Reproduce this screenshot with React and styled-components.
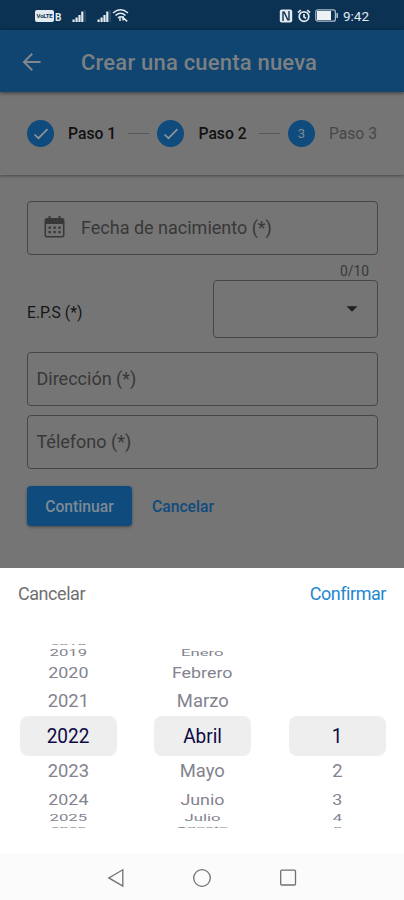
import styled, { createGlobalStyle } from "styled-components";

const years = ["2018", "2019", "2020", "2021", "2022", "2023", "2024", "2025", "2026"];
const months = ["", "Enero", "Febrero", "Marzo", "Abril", "Mayo", "Junio", "Julio", "Agosto"];
const days = ["", "", "", "", "1", "2", "3", "4", "5"];

// row height and text squeeze for each slot of the drum
const slots = [
  { h: 5, x: 0.85, y: 0.12 },
  { h: 13, x: 0.88, y: 0.46 },
  { h: 25, x: 0.94, y: 0.78 },
  { h: 31, x: 0.97, y: 0.94 },
  { h: 40, x: 1, y: 1.04 },
  { h: 29, x: 0.97, y: 0.94 },
  { h: 28, x: 0.94, y: 0.78 },
  { h: 11, x: 0.88, y: 0.44 },
  { h: 6, x: 0.85, y: 0.1 },
];

const Wheel = ({ items }) => (
  <Drum>
    {slots.map((slot, i) => (
      <Slot key={i} $h={slot.h} $active={i === 4}>
        <SlotText $x={slot.x} $y={slot.y}>
          {items[i]}
        </SlotText>
      </Slot>
    ))}
  </Drum>
);

const Check = () => (
  <svg width="18" height="18" viewBox="0 0 18 18" fill="none" stroke="#8d9296" strokeWidth="1.7">
    <path d="M2.5 9.5 L6.5 13.2 L15.5 4.2" />
  </svg>
);

const Signal = () => (
  <svg width="15" height="14" viewBox="0 0 15 14" fill="#e3eaf0">
    <rect x="0.5" y="10.5" width="2.2" height="2.5" />
    <rect x="3.5" y="8.5" width="2.2" height="4.5" />
    <rect x="6.4" y="6" width="2.2" height="7" />
    <rect x="9.2" y="2.5" width="2.2" height="10.5" />
    <rect x="12.6" y="1" width="1" height="12" opacity="0.25" />
  </svg>
);

export default function App() {
  return (
    <Screen>
      <GlobalStyle />
      <StatusBar>
        <StatusLeft>
          <Volte>
            <b>VoLTE</b>
          </Volte>
          <SimMark>B</SimMark>
          <SignalSlot $left={10}>
            <Signal />
          </SignalSlot>
          <SignalSlot $left={10}>
            <Signal />
          </SignalSlot>
          <svg width="17" height="15" viewBox="0 0 17 15" fill="none" stroke="#e3eaf0" strokeWidth="1.5">
            <path d="M1 5 Q8.5 -1.5 16 5" />
            <path d="M3.5 7.5 Q8.5 3 13.5 7.5" />
            <path d="M6 10 Q8.5 7.6 11 10" />
            <path d="M8 9.5 V13 M11 8 L11 12.5 M11 9.5 L15.2 13.4" />
          </svg>
        </StatusLeft>
        <StatusRight>
          <svg width="14" height="14" viewBox="0 0 14 14">
            <rect x="0.8" y="0.5" width="12.4" height="13" rx="2" fill="#e3eaf0" />
            <path d="M4 12 V3.2 L5.2 3.2 L8.8 10.8 L10 10.8 V2" fill="none" stroke="#0b3252" strokeWidth="1.4" />
          </svg>
          <svg width="14" height="14" viewBox="0 0 14 14" fill="none" stroke="#e3eaf0" strokeWidth="1.7">
            <circle cx="7" cy="7.6" r="4.8" />
            <path d="M7 5 V8 L9 9.2 M1 3.6 L3.8 1 M10.2 1 L13 3.6" />
          </svg>
          <svg width="24" height="13" viewBox="0 0 24 13">
            <rect x="0.8" y="0.8" width="19.6" height="11.4" rx="2" fill="none" stroke="#aebfcc" strokeWidth="1.2" />
            <rect x="2" y="2" width="14" height="9" fill="#eef2f5" />
            <rect x="21.4" y="4" width="1.6" height="5" fill="#aebfcc" />
          </svg>
          <Clock>9:42</Clock>
        </StatusRight>
      </StatusBar>
      <AppBar>
        <svg width="20" height="20" viewBox="0 0 20 20" fill="none" stroke="#82878b" strokeWidth="2">
          <path d="M18.6 10 H2.5 M10.2 1.8 L2 10 L10.2 18.2" />
        </svg>
        <Title>Crear una cuenta nueva</Title>
      </AppBar>
      <Stepper>
        <Step>
          <Bullet>
            <Check />
          </Bullet>
          <StepLabel $done>Paso 1</StepLabel>
        </Step>
        <Line />
        <Step>
          <Bullet>
            <Check />
          </Bullet>
          <StepLabel $done>Paso 2</StepLabel>
        </Step>
        <Line />
        <Step>
          <Bullet>3</Bullet>
          <StepLabel>Paso 3</StepLabel>
        </Step>
      </Stepper>
      <Form>
        <Field $icon>
          <svg width="21" height="24" viewBox="0 0 21 24">
            <path d="M3 3 H4.5 V1 H6.5 V3 H14.5 V1 H16.5 V3 H18 Q20.5 3 20.5 5.5 V20 Q20.5 22.5 18 22.5 H3 Q0.5 22.5 0.5 20 V5.5 Q0.5 3 3 3 Z" fill="#383838" />
            <rect x="2" y="9" width="17" height="12" rx="1" fill="#737373" />
            <path d="M4.5 12.6 H16.8 M4.5 17.2 H16.8" stroke="#383838" strokeWidth="2.2" strokeDasharray="2.4 2.5" />
          </svg>
          <span>Fecha de nacimiento (*)</span>
        </Field>
        <Counter>0/10</Counter>
        <SelectRow>
          <SelectLabel>E.P.S (*)</SelectLabel>
          <Select>
            <svg width="12" height="6" viewBox="0 0 12 6" fill="#1f1f1f">
              <path d="M0.5 0.3 H11.5 L6 5.8 Z" />
            </svg>
          </Select>
        </SelectRow>
        <Field $top={14}>Dirección (*)</Field>
        <Field $top={9}>Télefono (*)</Field>
        <Actions>
          <Continue>Continuar</Continue>
          <Cancel>Cancelar</Cancel>
        </Actions>
      </Form>
      <Sheet>
        <SheetHeader>
          <SheetButton>Cancelar</SheetButton>
          <SheetButton $primary>Confirmar</SheetButton>
        </SheetHeader>
        <Wheels>
          <Wheel items={years} />
          <Wheel items={months} />
          <Wheel items={days} />
        </Wheels>
      </Sheet>
      <NavBar>
        <svg width="18" height="20" viewBox="0 0 18 20">
          <path d="M15.8 1.8 V18 L1.8 9.9 Z" />
        </svg>
        <svg width="20" height="20" viewBox="0 0 20 20">
          <circle cx="10" cy="10" r="8.3" />
        </svg>
        <svg width="18" height="20" viewBox="0 0 18 20">
          <rect x="1.7" y="2.2" width="14.8" height="14.8" rx="1" />
        </svg>
      </NavBar>
    </Screen>
  );
}

const GlobalStyle = createGlobalStyle`
  * {
    box-sizing: border-box;
  }
  body {
    margin: 0;
    background: #757575;
  }
  svg {
    display: block;
    flex: none;
  }
`;

const Screen = styled.div`
  width: 404px;
  height: 900px;
  display: flex;
  flex-direction: column;
  overflow: hidden;
  background: #757575;
  font-family: Roboto, "Liberation Sans", sans-serif;
  white-space: nowrap;
`;

const StatusBar = styled.div`
  height: 30px;
  flex: none;
  display: flex;
  justify-content: space-between;
  padding: 1px 35px 0 35px;
  background: #0b3252;
  color: #e3eaf0;
`;

const StatusLeft = styled.div`
  display: flex;
  align-items: center;
`;

const StatusRight = styled(StatusLeft)`
  gap: 4px;
`;

const Volte = styled.span`
  display: flex;
  align-items: center;
  justify-content: center;
  width: 19px;
  height: 12px;
  border-radius: 2px;
  background: #e3eaf0;
  color: #0b3252;
  b {
    font-size: 6px;
    letter-spacing: -0.2px;
  }
`;

const SimMark = styled.span`
  width: 8px;
  padding: 3px 0 0 1px;
  font-size: 10px;
  font-weight: 700;
`;

const SignalSlot = styled.span`
  margin-left: ${({ $left }) => $left}px;
`;

const Clock = styled.span`
  width: 26px;
  font-size: 13.5px;
  font-weight: 400;
`;

const AppBar = styled.header`
  position: relative;
  height: 62px;
  flex: none;
  display: flex;
  align-items: center;
  gap: 39px;
  padding: 2px 0 0 22px;
  background: #0f4570;
  box-shadow: 0 1px 4px rgba(0, 0, 0, 0.5);
`;

const Title = styled.h1`
  margin: 0;
  font-size: 22px;
  font-weight: 500;
  letter-spacing: 0.2px;
  color: #7d8082;
`;

const Stepper = styled.div`
  height: 83px;
  flex: none;
  display: flex;
  align-items: center;
  padding: 0 27px;
  box-shadow: 0 1px 3px rgba(0, 0, 0, 0.4);
`;

const Step = styled.div`
  display: flex;
  align-items: center;
  gap: 14px;
`;

const Bullet = styled.span`
  display: flex;
  align-items: center;
  justify-content: center;
  width: 27px;
  height: 27px;
  border-radius: 50%;
  background: #0f4b7d;
  color: #7f8a93;
  font-size: 13px;
`;

const StepLabel = styled.span`
  font-size: 15.7px;
  font-weight: ${({ $done }) => ($done ? 500 : 400)};
  color: ${({ $done }) => ($done ? "#111" : "#474747")};
`;

const Line = styled.span`
  flex: 1;
  height: 1px;
  margin: 0 8px 0 12px;
  background: #585858;
`;

const Form = styled.div`
  flex: 1;
  padding: 26px 26px 0 27px;
`;

const Field = styled.div`
  display: flex;
  align-items: center;
  gap: 16px;
  height: 54px;
  margin-top: ${({ $top }) => $top || 0}px;
  padding: 0 0 2px ${({ $icon }) => ($icon ? 16 : 8.5)}px;
  border: 1px solid #464646;
  border-radius: 4px;
  color: #383838;
  font-size: 18px;
`;

const Counter = styled.div`
  height: 25px;
  padding: 8px 9px 0 0;
  text-align: right;
  font-size: 13.8px;
  line-height: 16px;
  color: #383838;
`;

const SelectRow = styled.div`
  display: flex;
  align-items: center;
  justify-content: space-between;
`;

const SelectLabel = styled.span`
  padding-top: 6px;
  font-size: 15.7px;
  color: #161616;
`;

const Select = styled.div`
  display: flex;
  align-items: center;
  justify-content: flex-end;
  width: 165px;
  height: 58px;
  padding-right: 19px;
  border: 1px solid #464646;
  border-radius: 4px;
`;

const Actions = styled.div`
  display: flex;
  gap: 20px;
  align-items: center;
  margin-top: 17px;
`;

const Button = styled.button`
  border: none;
  padding: 0;
  font-family: inherit;
  font-size: 15.7px;
  font-weight: 500;
`;

const Continue = styled(Button)`
  width: 105px;
  height: 40px;
  border-radius: 4px;
  background: #0f4b7d;
  color: #7d8a95;
  box-shadow: 0 1px 3px rgba(0, 0, 0, 0.4);
`;

const Cancel = styled(Button)`
  background: none;
  color: #0f4b7d;
`;

const Sheet = styled.div`
  height: 285px;
  flex: none;
  background: #fff;
`;

const SheetHeader = styled.div`
  display: flex;
  justify-content: space-between;
  align-items: center;
  height: 50px;
  padding: 0 18px;
`;

const SheetButton = styled(Button)`
  background: none;
  font-size: 18px;
  font-weight: 400;
  letter-spacing: -0.45px;
  color: ${({ $primary }) => ($primary ? "#1e88d2" : "#707070")};
`;

const Wheels = styled.div`
  display: flex;
  justify-content: space-between;
  padding: 24px 18.5px 0 19.5px;
`;

const Drum = styled.div`
  width: 97px;
`;

const Slot = styled.div`
  display: flex;
  align-items: center;
  justify-content: center;
  height: ${({ $h }) => $h}px;
  border-radius: 8px;
  background: ${({ $active }) => ($active ? "#eee" : "none")};
  color: ${({ $active }) => ($active ? "#0d0a45" : "#83838f")};
`;

const SlotText = styled.span`
  font-size: 19px;
  transform: scale(${({ $x }) => $x}, ${({ $y }) => $y});
`;

const NavBar = styled.nav`
  display: flex;
  align-items: center;
  justify-content: space-between;
  height: 47px;
  flex: none;
  padding: 2px 107px 0 107px;
  background: #fbfbfb;
  svg {
    fill: none;
    stroke: #707070;
    stroke-width: 1.3;
  }
`;
